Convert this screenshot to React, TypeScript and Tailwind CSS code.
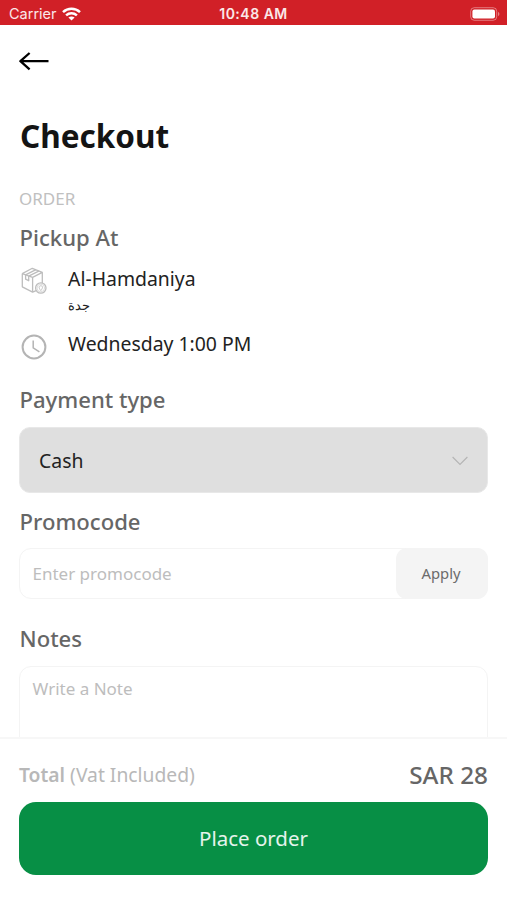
import { useState } from "react";
import type { ReactNode } from "react";

const WifiIcon = () => (
    <svg width="19" height="14" viewBox="0 0 19 14" fill="none" stroke="#fff" strokeWidth="2.5">
        <path d="M1 5.2C5.8 .7 13.2 .7 18 5.2" />
        <path d="M4.1 8.4c3.1-2.8 7.7-2.8 10.8 0" />
        <path d="M9.5 13.6 6.4 10.6c1.8-1.5 4.4-1.5 6.2 0z" fill="#fff" stroke="none" />
    </svg>
);

const BatteryIcon = () => (
    <svg width="30" height="14" viewBox="0 0 30 14" fill="none">
        <rect x=".7" y=".7" width="26" height="12.6" rx="3.6" stroke="#fff" strokeOpacity=".4" />
        <rect x="2.4" y="2.4" width="22.6" height="9.2" rx="2" fill="#fff" />
        <path d="M28.1 4.8c1.7.7 1.7 3.7 0 4.4z" fill="#fff" fillOpacity=".5" />
    </svg>
);

const ArrowLeft = () => (
    <svg width="30" height="20" viewBox="0 0 30 20" fill="none" stroke="#000" strokeWidth="2.3" strokeLinejoin="round">
        <path d="M29.5 10.2H1.8M10.6 2 1.4 10.2l9.2 8.2" />
    </svg>
);

const PackageIcon = () => (
    <svg width="28" height="28" viewBox="0 0 28 28" fill="none" stroke="#bdbdbd" strokeWidth="1.3" strokeLinejoin="round">
        <path d="M1.3 6.6 11.3 1.3l10 4.1v11M1.3 6.6v13.2l10.3 5.4 3.6-1.6M1.3 6.6l10.3 3.8v14.8M11.6 10.4l9.7-5" />
        <path d="M4.6 7.8 15 2.6M7.7 9.1 18.2 3.9M4.6 7.8v4.4l3.1 1.5V9.1" />
        <circle cx="19.8" cy="21" r="5.2" fill="#fff" />
        <circle cx="19.8" cy="21" r="3.8" strokeWidth=".5" />
        <path d="M19.8 18.8c-2.4 0-2.1 2.3 0 4.8 2.1-2.5 2.4-4.8 0-4.8z" strokeWidth=".9" />
    </svg>
);

const ClockIcon = () => (
    <svg width="26" height="26" viewBox="0 0 26 26" fill="none" stroke="#b4b4b4" strokeWidth="2">
        <circle cx="13" cy="13" r="11.4" />
        <path d="M12.2 6.6v7.2l6.2 4" strokeWidth="1.5" />
    </svg>
);

const ChevronDown = () => (
    <svg width="16" height="10" viewBox="0 0 16 10" fill="none" stroke="#b5b5b5" strokeWidth="1.2">
        <path d="M.6 1 8 8.4 15.4 1" />
    </svg>
);

const SectionTitle = ({ children }: { children: ReactNode }) => (
    <h2 className="text-[22.1px] leading-8 font-medium text-[#666]">{children}</h2>
);

export default function App() {
    const [promocode, setPromocode] = useState("");
    const [note, setNote] = useState("");

    return (
        <div className="flex h-[900px] w-[507px] flex-col overflow-hidden bg-white font-['Noto_Sans',sans-serif] text-[#222]">
            {/* status bar */}
            <div className="grid h-[25px] shrink-0 grid-cols-3 items-center bg-[#d12027] pr-[7px] pl-[9px] pt-[2px] font-['Inter',sans-serif] text-white">
                <div className="flex items-center gap-[5px]">
                    <span className="text-[14.5px] leading-5 text-white/90">Carrier</span>
                    <WifiIcon />
                </div>
                <span className="pr-[2px] text-center text-[14px] leading-5 font-semibold tracking-[0.5px] text-white/90">10:48 AM</span>
                <div className="flex justify-end">
                    <BatteryIcon />
                </div>
            </div>

            <main className="flex min-h-0 flex-1 flex-col overflow-hidden px-[19px]">
                <button className="mt-[26px] h-5 w-[30px] shrink-0" aria-label="Back">
                    <ArrowLeft />
                </button>
                <h1 className="mt-[41px] pl-[1px] text-[31.5px] leading-[48px] font-bold text-[#141414]">Checkout</h1>
                <p className="mt-[27px] text-[17px] leading-6 text-[#c0c0c0]">ORDER</p>
                <div className="mt-[10px] pl-[0.5px]">
                    <SectionTitle>Pickup At</SectionTitle>
                </div>

                <div className="mt-[12px] flex h-[65px] shrink-0 gap-5">
                    <div className="w-7 pt-[2px] pl-[2px]">
                        <PackageIcon />
                    </div>
                    <div className="pl-[1px]">
                        <p className="text-[19.4px] leading-7">Al-Hamdaniya</p>
                        <p className="pt-[2px] text-[13px] leading-5">جدة</p>
                    </div>
                </div>
                <div className="flex h-7 shrink-0 gap-5">
                    <div className="w-7 pt-[4px] pl-[2px]">
                        <ClockIcon />
                    </div>
                    <p className="pl-[1px] text-[19.4px] leading-7">Wednesday 1:00 PM</p>
                </div>

                <div className="mt-[25px] pl-[0.5px]">
                    <SectionTitle>Payment type</SectionTitle>
                </div>
                <button className="mt-[12px] flex h-[66px] shrink-0 items-center justify-between rounded-[11px] border border-[#e8e8e8] bg-[#dfdfdf] px-[19px] pt-px text-[19.4px]">
                    <span>Cash</span>
                    <ChevronDown />
                </button>

                <div className="mt-[12px] pl-[0.5px]">
                    <SectionTitle>Promocode</SectionTitle>
                </div>
                <div className="mt-[11px] flex h-[51px] shrink-0 rounded-[12px] border border-[#f4f4f4]">
                    <input
                        value={promocode}
                        onChange={(e) => setPromocode(e.target.value)}
                        placeholder="Enter promocode"
                        className="min-w-0 flex-1 px-[12.5px] text-[17px] outline-none placeholder:text-[#bdbdbd]"
                    />
                    <button className="-my-px -mr-px w-[92px] rounded-[11px] bg-[#f4f4f4] pr-[2px] text-[14.8px] text-[#6b6b6b]">Apply</button>
                </div>

                <div className="mt-[23px] pl-[0.5px]">
                    <SectionTitle>Notes</SectionTitle>
                </div>
                <textarea
                    value={note}
                    onChange={(e) => setNote(e.target.value)}
                    placeholder="Write a Note"
                    className="mt-[12px] h-[120px] shrink-0 resize-none rounded-[12px] border border-[#f4f4f4] px-[12.5px] pt-[10px] text-[17px] leading-6 outline-none placeholder:text-[#bdbdbd]"
                />
            </main>

            <footer className="h-[163px] shrink-0 border-t-2 border-[#f7f7f7] bg-white px-[19px]">
                <div className="flex h-[63px] items-center justify-between pt-[8px]">
                    <p className="pt-px text-[19.3px] text-[#b8b8b8]">
                        <span className="font-semibold">Total</span> (Vat Included)
                    </p>
                    <p className="text-[24.3px] leading-[34px] font-medium text-[#666]">SAR 28</p>
                </div>
                <button className="h-[73px] w-full rounded-[17px] bg-[#078f45] text-[20.5px] text-white/90">Place order</button>
            </footer>
        </div>
    );
}
